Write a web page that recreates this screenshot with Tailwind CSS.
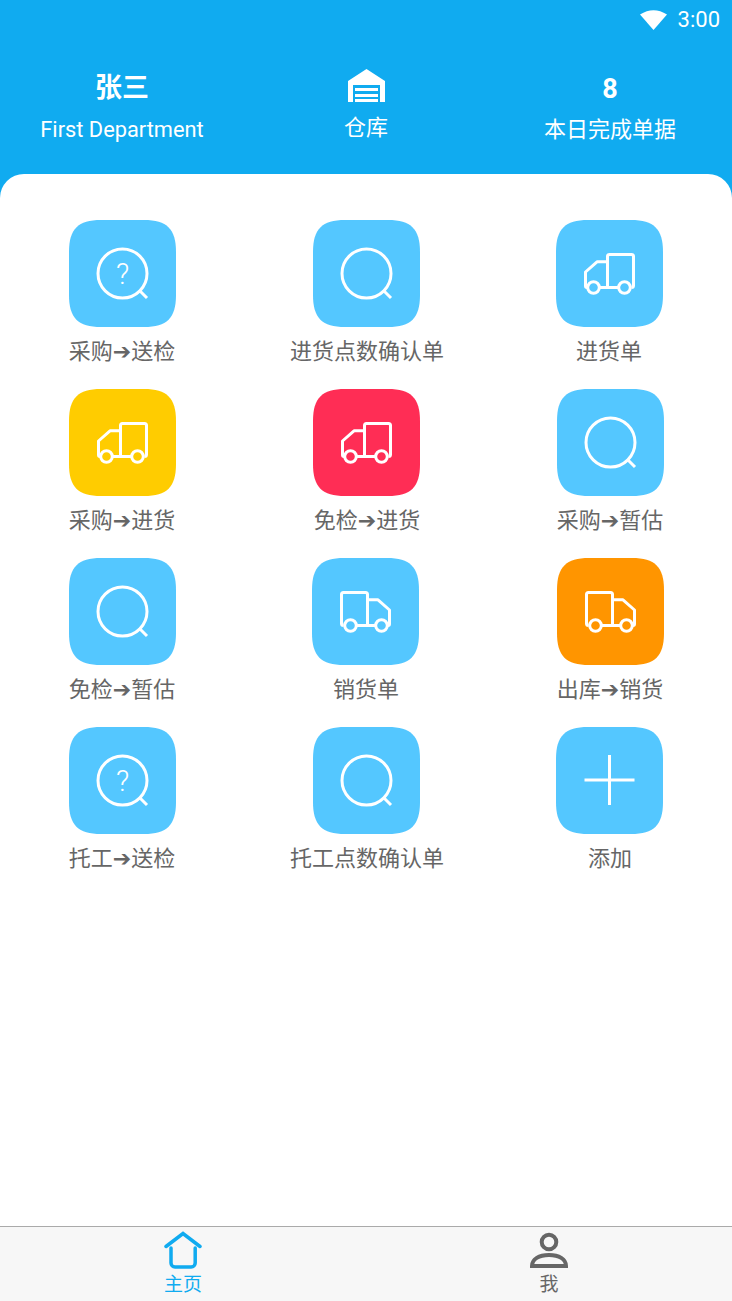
<!DOCTYPE html>
<html lang="zh-CN">
  <head>
    <meta charset="UTF-8" />
    <meta name="viewport" content="width=device-width, initial-scale=1.0" />
    <title>主页</title>
    <script src="https://cdn.jsdelivr.net/npm/@tailwindcss/browser@4"></script>
  </head>
  <body class="bg-white font-['Roboto','Noto_Sans_CJK_SC','DejaVu_Sans',sans-serif]">
    <!-- Shared icons -->
    <svg class="hidden">
      <symbol id="tile" viewBox="0 0 107 107">
        <path d="M32 0H75C98 0 107 9 107 32V75C107 98 98 107 75 107H32C9 107 0 98 0 75V32C0 9 9 0 32 0Z" fill="currentColor" />
      </symbol>
      <symbol id="search" viewBox="0 0 107 107">
        <circle cx="53.5" cy="53.5" r="24.5" fill="none" stroke="white" stroke-width="3" />
        <path d="M71 71l7 7" fill="none" stroke="white" stroke-width="3" />
      </symbol>
      <symbol id="truck-left" viewBox="0 0 107 107">
        <g fill="none" stroke="white" stroke-width="3" stroke-linejoin="round">
          <path d="M51.500 67.500V36.500a2 2 0 0 1 2-2h22a2 2 0 0 1 2 2V65.500a2 2 0 0 1-2 2M63 67.500H44M31 67.500a1.500 1.500 0 0 1-1.500-1.500V52L41 41.800H51.500" />
          <circle cx="37.5" cy="67.5" r="5.8" />
          <circle cx="68.5" cy="67.5" r="5.8" />
        </g>
      </symbol>
      <symbol id="truck-right" viewBox="0 0 107 107">
        <g fill="none" stroke="white" stroke-width="3" stroke-linejoin="round">
          <path d="M55.500 67.500V36.500a2 2 0 0 0-2-2h-22a2 2 0 0 0-2 2V65.500a2 2 0 0 0 2 2M44 67.500H63M76 67.500a1.500 1.500 0 0 0 1.500-1.500V52L66 41.800H55.500" />
          <circle cx="69.5" cy="67.5" r="5.8" />
          <circle cx="38.5" cy="67.5" r="5.8" />
        </g>
      </symbol>
    </svg>

    <div class="flex h-[1301px] flex-col overflow-hidden">
      <!-- Header -->
      <header class="h-[198px] shrink-0 bg-[#10abf0] text-white">
        <div class="flex h-[40px] items-center justify-end gap-[10px] pr-[12px]">
          <svg width="28" height="22" viewBox="0 0 28 22">
            <path d="M0 5.5Q13.500 -3 27 5.500L13.500 21Z" fill="white" />
          </svg>
          <span class="text-[22px] leading-none">3:00</span>
        </div>
        <div class="grid grid-cols-3 text-center">
          <div class="flex flex-col items-center">
            <span class="mt-[29px] h-[38px] text-[27px] leading-[38px] font-bold">张三</span>
            <span class="mt-[9px] text-[21.8px] leading-[28px]">First Department</span>
          </div>
          <div class="flex flex-col items-center">
            <svg class="mt-[29px]" width="37" height="33" viewBox="0 0 37 33">
              <path d="M0 33V12L18.500 0L37 12V33H32V16H5V33Z" fill="white" />
              <path d="M7 19h23v3H7zM7 25h23v3H7zM7 30h23v3H7z" fill="white" />
            </svg>
            <span class="pt-[12px] text-[22px] leading-[28px]">仓库</span>
          </div>
          <div class="flex flex-col items-center">
            <span class="mt-[30px] h-[38px] text-[27px] leading-[38px] font-bold">8</span>
            <span class="mt-[8px] text-[22px] leading-[28px]">本日完成单据</span>
          </div>
        </div>
      </header>

      <!-- Function grid -->
      <main class="-mt-[24px] grid flex-1 grid-cols-3 content-start gap-y-[23px] rounded-t-[24px] bg-white pt-[46px] text-center text-[22px] leading-[28px] text-[#666666]">
        <div class="flex flex-col items-center gap-[11px]">
          <svg class="text-[#54c7ff]" width="107" height="107">
            <use href="#tile" /><use href="#search" />
            <text class="font-light" x="53.5" y="64" text-anchor="middle" font-size="29" fill="white">?</text>
          </svg>
          <span>采购➔送检</span>
        </div>
        <div class="flex flex-col items-center gap-[11px]">
          <svg class="text-[#54c7ff]" width="107" height="107"><use href="#tile" /><use href="#search" /></svg>
          <span class="translate-x-px">进货点数确认单</span>
        </div>
        <div class="flex flex-col items-center gap-[11px]">
          <svg class="-translate-x-px text-[#54c7ff]" width="107" height="107"><use href="#tile" /><use href="#truck-left" /></svg>
          <span class="-translate-x-px">进货单</span>
        </div>

        <div class="flex flex-col items-center gap-[11px]">
          <svg class="text-[#ffcc00]" width="107" height="107"><use href="#tile" /><use href="#truck-left" /></svg>
          <span>采购➔进货</span>
        </div>
        <div class="flex flex-col items-center gap-[11px]">
          <svg class="text-[#ff2d55]" width="107" height="107"><use href="#tile" /><use href="#truck-left" /></svg>
          <span class="translate-x-px">免检➔进货</span>
        </div>
        <div class="flex flex-col items-center gap-[11px]">
          <svg class="text-[#54c7ff]" width="107" height="107"><use href="#tile" /><use href="#search" /></svg>
          <span>采购➔暂估</span>
        </div>

        <div class="flex flex-col items-center gap-[11px]">
          <svg class="text-[#54c7ff]" width="107" height="107"><use href="#tile" /><use href="#search" /></svg>
          <span>免检➔暂估</span>
        </div>
        <div class="flex flex-col items-center gap-[11px]">
          <svg class="-translate-x-px text-[#54c7ff]" width="107" height="107"><use href="#tile" /><use href="#truck-right" /></svg>
          <span>销货单</span>
        </div>
        <div class="flex flex-col items-center gap-[11px]">
          <svg class="text-[#ff9500]" width="107" height="107"><use href="#tile" /><use href="#truck-right" /></svg>
          <span>出库➔销货</span>
        </div>

        <div class="flex flex-col items-center gap-[11px]">
          <svg class="text-[#54c7ff]" width="107" height="107">
            <use href="#tile" /><use href="#search" />
            <text class="font-light" x="53.5" y="64" text-anchor="middle" font-size="29" fill="white">?</text>
          </svg>
          <span>托工➔送检</span>
        </div>
        <div class="flex flex-col items-center gap-[11px]">
          <svg class="text-[#54c7ff]" width="107" height="107"><use href="#tile" /><use href="#search" /></svg>
          <span class="translate-x-px">托工点数确认单</span>
        </div>
        <div class="flex flex-col items-center gap-[11px]">
          <svg class="-translate-x-px text-[#54c7ff]" width="107" height="107" viewBox="0 0 107 107">
            <use href="#tile" />
            <path d="M53.500 28v50M28.500 53h50" fill="none" stroke="white" stroke-width="3" />
          </svg>
          <span>添加</span>
        </div>
      </main>

      <!-- Tab bar -->
      <footer class="grid h-[75px] shrink-0 grid-cols-2 border-t border-[#aaaaaa] bg-[#f7f7f7] text-[19px] leading-[22px]">
        <div class="flex flex-col items-center text-[#10abf0]">
          <svg class="mt-[4px]" width="38" height="38" viewBox="0 0 38 38">
            <path d="M2 15.500L19 2.500L36 15.500M7 17V32a4 4 0 0 0 4 4H27.200a4 4 0 0 0 4-4V17" fill="none" stroke="currentColor" stroke-width="3.500" stroke-linecap="round" />
          </svg>
          <span class="mt-[5px]">主页</span>
        </div>
        <div class="flex flex-col items-center text-[#666666]">
          <svg class="mt-[4px]" width="38" height="38" viewBox="0 0 38 38">
            <circle cx="19" cy="11" r="7.300" fill="none" stroke="currentColor" stroke-width="4" />
            <path d="M2 35c0-7 7-11 17-11s17 4 17 11Z" fill="none" stroke="currentColor" stroke-width="4" />
          </svg>
          <span class="mt-[5px]">我</span>
        </div>
      </footer>
    </div>
  </body>
</html>
